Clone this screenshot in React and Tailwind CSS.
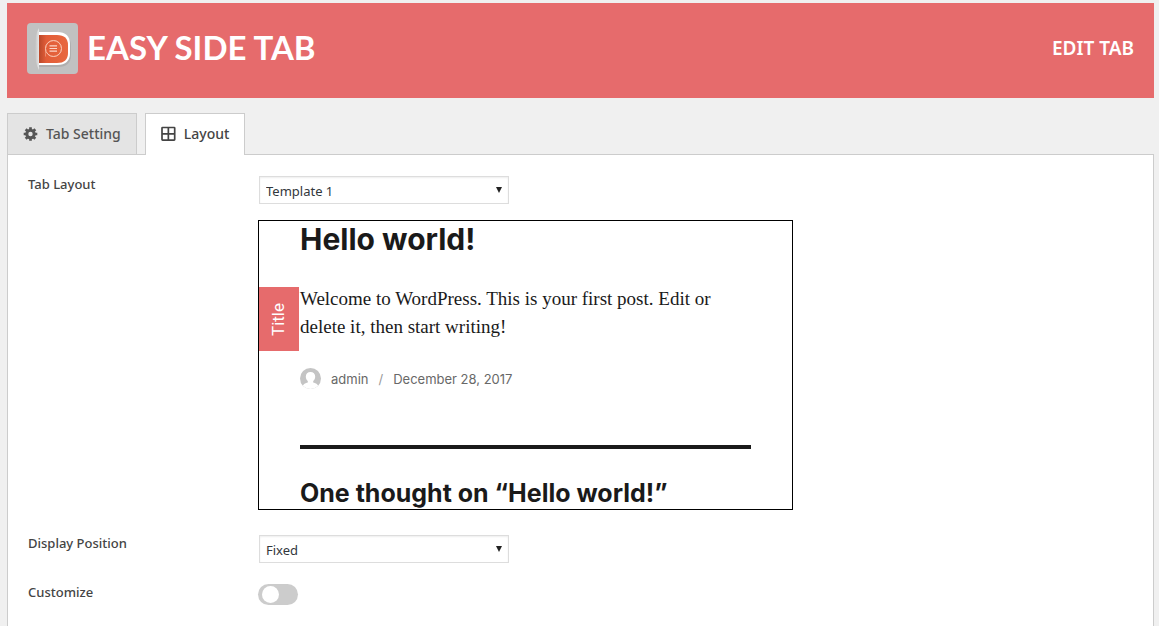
import React, { useState } from "react";

const tabs = [
  { id: "setting", label: "Tab Setting", icon: GearIcon },
  { id: "layout", label: "Layout", icon: GridIcon },
];

const templates = ["Template 1", "Template 2", "Template 3", "Template 4", "Template 5"];
const positions = ["Fixed", "Absolute"];

function GearIcon() {
  return (
    <svg viewBox="0 0 16 16" className="h-4 w-4" aria-hidden="true">
      <circle cx="7.500" cy="8" r="3.700" fill="none" stroke="currentColor" strokeWidth="3" />
      <path
        d="M7.500 1.200v2.300M7.500 12.500v2.300M.700 8H3M12 8h2.300M2.700 3.200l1.600 1.600M10.700 11.200l1.600 1.600M12.300 3.200l-1.600 1.600M4.300 11.200l-1.600 1.600"
        stroke="currentColor"
        strokeWidth="2.700"
      />
    </svg>
  );
}

function GridIcon() {
  return (
    <svg viewBox="0 0 16 16" className="h-4 w-4" fill="none" stroke="currentColor" strokeWidth="1.700" aria-hidden="true">
      <rect x="1" y="1.500" width="12.700" height="12.700" rx="0.600" />
      <path d="M7.350 1.500v12.700M1 7.850h12.700" />
    </svg>
  );
}

function Logo() {
  return (
    <svg viewBox="0 0 51 51" className="h-[51px] w-[51px] shrink-0" role="img" aria-label="Easy Side Tab logo">
      <defs>
        <linearGradient id="slit" x1="0" x2="1">
          <stop offset="0" stopColor="#c1c1c1" />
          <stop offset="1" stopColor="#e6e6e6" />
        </linearGradient>
        <linearGradient id="tab" x1="0" x2="1">
          <stop offset="0" stopColor="#b9482a" />
          <stop offset="0.250" stopColor="#e25d38" />
          <stop offset="1" stopColor="#e8683f" />
        </linearGradient>
      </defs>
      <rect width="51" height="51" rx="4" fill="#c1c1c1" />
      <path d="M12 5v42q-4-6-4-21t4-21z" fill="url(#slit)" />
      <path d="M12 11h19q13 0 13 12v9q0 12-13 12H12z" fill="#a4a4a4" opacity="0.600" />
      <path d="M12 9h18q13 0 13 12v9q0 12-13 12H12z" fill="#fff" />
      <path d="M12 12h18q11 0 11 10v8q0 10-11 10H12z" fill="url(#tab)" />
      <path
        d="M18.500 33.500v-8a8 8 0 1 1 3 6.300"
        fill="none"
        stroke="#f3a98f"
        strokeWidth="0.600"
      />
      <circle cx="26.500" cy="25.500" r="8" fill="none" stroke="#f8c4b0" strokeWidth="1" />
      <path d="M22.500 22.800h7.500M22.500 25.500h7.500M22.500 28.200h7.500" stroke="#fbd5c7" strokeWidth="1.200" />
    </svg>
  );
}

function Avatar() {
  return (
    <svg viewBox="0 0 21 21" className="h-[21px] w-[21px]" aria-hidden="true">
      <clipPath id="avatar-clip">
        <circle cx="10.500" cy="10.500" r="10.500" />
      </clipPath>
      <g clipPath="url(#avatar-clip)">
        <rect width="21" height="21" fill="#c4c4c4" />
        <path
          d="M10.500 4c2.900 0 4.700 2 4.700 4.600 0 2-.900 3.600-2 4.500v1.400c2.200.700 4.800 1.500 5.200 4V21H2.600v-2.500c.400-2.500 3-3.300 5.200-4v-1.400c-1.100-.900-2-2.500-2-4.500C5.800 6 7.600 4 10.500 4z"
          fill="#fff"
        />
      </g>
    </svg>
  );
}

const OptionRow = ({ id, label, className, children }) => (
  <div className={`flex items-start ${className}`}>
    <label htmlFor={id} className="w-[230px] shrink-0 text-[13px] leading-4 font-medium text-[#444]">
      {label}
    </label>
    <div className="min-w-0">{children}</div>
  </div>
);

const SelectField = ({ id, value, options, onChange }) => (
  <div className="relative ml-px w-[250px]">
    <select
      id={id}
      value={value}
      onChange={(e) => onChange(e.target.value)}
      className="block h-7 w-full appearance-none border border-[#ddd] bg-white pt-0.5 pr-6 pl-1.5 text-[13px] leading-5 text-[#32373c] shadow-[inset_0_1px_2px_rgba(0,0,0,0.07)]"
    >
      {options.map((option) => (
        <option key={option}>{option}</option>
      ))}
    </select>
    <svg viewBox="0 0 6 6" className="pointer-events-none absolute top-[11px] right-[7px] h-1.5 w-1.5" aria-hidden="true">
      <path d="M0 0h6L3 6z" fill="#222" />
    </svg>
  </div>
);

const TemplatePreview = () => (
  <div className="relative mt-4 h-[290px] w-[535px] overflow-hidden border border-black px-[41px] text-[#1a1a1a]">
    <h2 className="font-['Inter',sans-serif] text-[30px] leading-9 font-bold">Hello world!</h2>
    <p className="mt-7 font-['Liberation_Serif',serif] text-[19px] leading-7 whitespace-nowrap">
      Welcome to WordPress. This is your first post. Edit or
      <br />
      delete it, then start writing!
    </p>
    <div className="mt-[27px] flex items-center font-['Inter',sans-serif] text-[13px] leading-5 text-[#686868]">
      <Avatar />
      <span className="ml-2.5">admin</span>
      <span className="mx-2.5 text-[#999]">/</span>
      <span>December 28, 2017</span>
    </div>
    <hr className="mt-14 border-t-4 border-[#1a1a1a]" />
    <h3 className="mt-7 font-['Inter',sans-serif] text-[25px] leading-8 font-bold whitespace-nowrap">
      One thought on “Hello world!”
    </h3>
    <div className="absolute top-[66px] left-0 flex h-16 w-10 items-center justify-center bg-[#e66b6c] text-white">
      <span className="rotate-180 font-['Roboto',sans-serif] text-[17px] [writing-mode:vertical-rl]">Title</span>
    </div>
  </div>
);

const App = () => {
  const [activeTab, setActiveTab] = useState("layout");
  const [template, setTemplate] = useState("Template 1");
  const [position, setPosition] = useState("Fixed");
  const [customize, setCustomize] = useState(false);

  return (
    <div className="flex min-h-screen flex-col bg-[#f0f0f0] pt-[3px] pr-[5px] pl-[7px] font-['Noto_Sans',sans-serif]">
      <header className="flex items-start justify-between bg-[#e66b6c] px-5 pt-5 pb-6 text-white">
        <div className="flex items-start gap-[9px]">
          <Logo />
          <h1 className="font-['Lato',sans-serif] text-[33px] leading-[48px] font-bold whitespace-nowrap">
            EASY SIDE TAB
          </h1>
        </div>
        <div className="text-[19px] leading-[51px] font-semibold">EDIT TAB</div>
      </header>

      <nav className="mt-[15px] flex gap-2">
        {tabs.map(({ id, label, icon: Icon }) => (
          <button
            key={id}
            type="button"
            onClick={() => setActiveTab(id)}
            className={
              activeTab === id
                ? "relative z-10 -mb-px flex h-[42px] items-center gap-[7px] border border-b-0 border-[#ccc] bg-white px-[15px] pb-px text-sm font-medium text-[#444]"
                : "flex h-[41px] items-center gap-[7px] border border-b-0 border-[#ccc] bg-[#e4e4e4] px-[15px] text-sm font-medium text-[#555]"
            }
          >
            <Icon />
            {label}
          </button>
        ))}
      </nav>

      <main className="flex-1 border border-b-0 border-[#ccc] bg-white px-5 pt-[21px] pb-5">
        <OptionRow id="tab-layout" label="Tab Layout" className="">
          <SelectField id="tab-layout" value={template} options={templates} onChange={setTemplate} />
          <TemplatePreview />
        </OptionRow>

        <OptionRow id="display-position" label="Display Position" className="mt-[25px]">
          <SelectField id="display-position" value={position} options={positions} onChange={setPosition} />
        </OptionRow>

        <OptionRow id="customize" label="Customize" className="mt-[21px]">
          <input
            id="customize"
            type="checkbox"
            role="switch"
            checked={customize}
            onChange={(e) => setCustomize(e.target.checked)}
            className="block h-[21px] w-10 cursor-pointer appearance-none rounded-full bg-[#ccc] p-0.5 pl-1 before:block before:h-[17px] before:w-[17px] before:rounded-full before:bg-white before:transition-transform checked:bg-[#e66b6c] checked:before:translate-x-4"
          />
        </OptionRow>
      </main>
    </div>
  );
};

export default App;
